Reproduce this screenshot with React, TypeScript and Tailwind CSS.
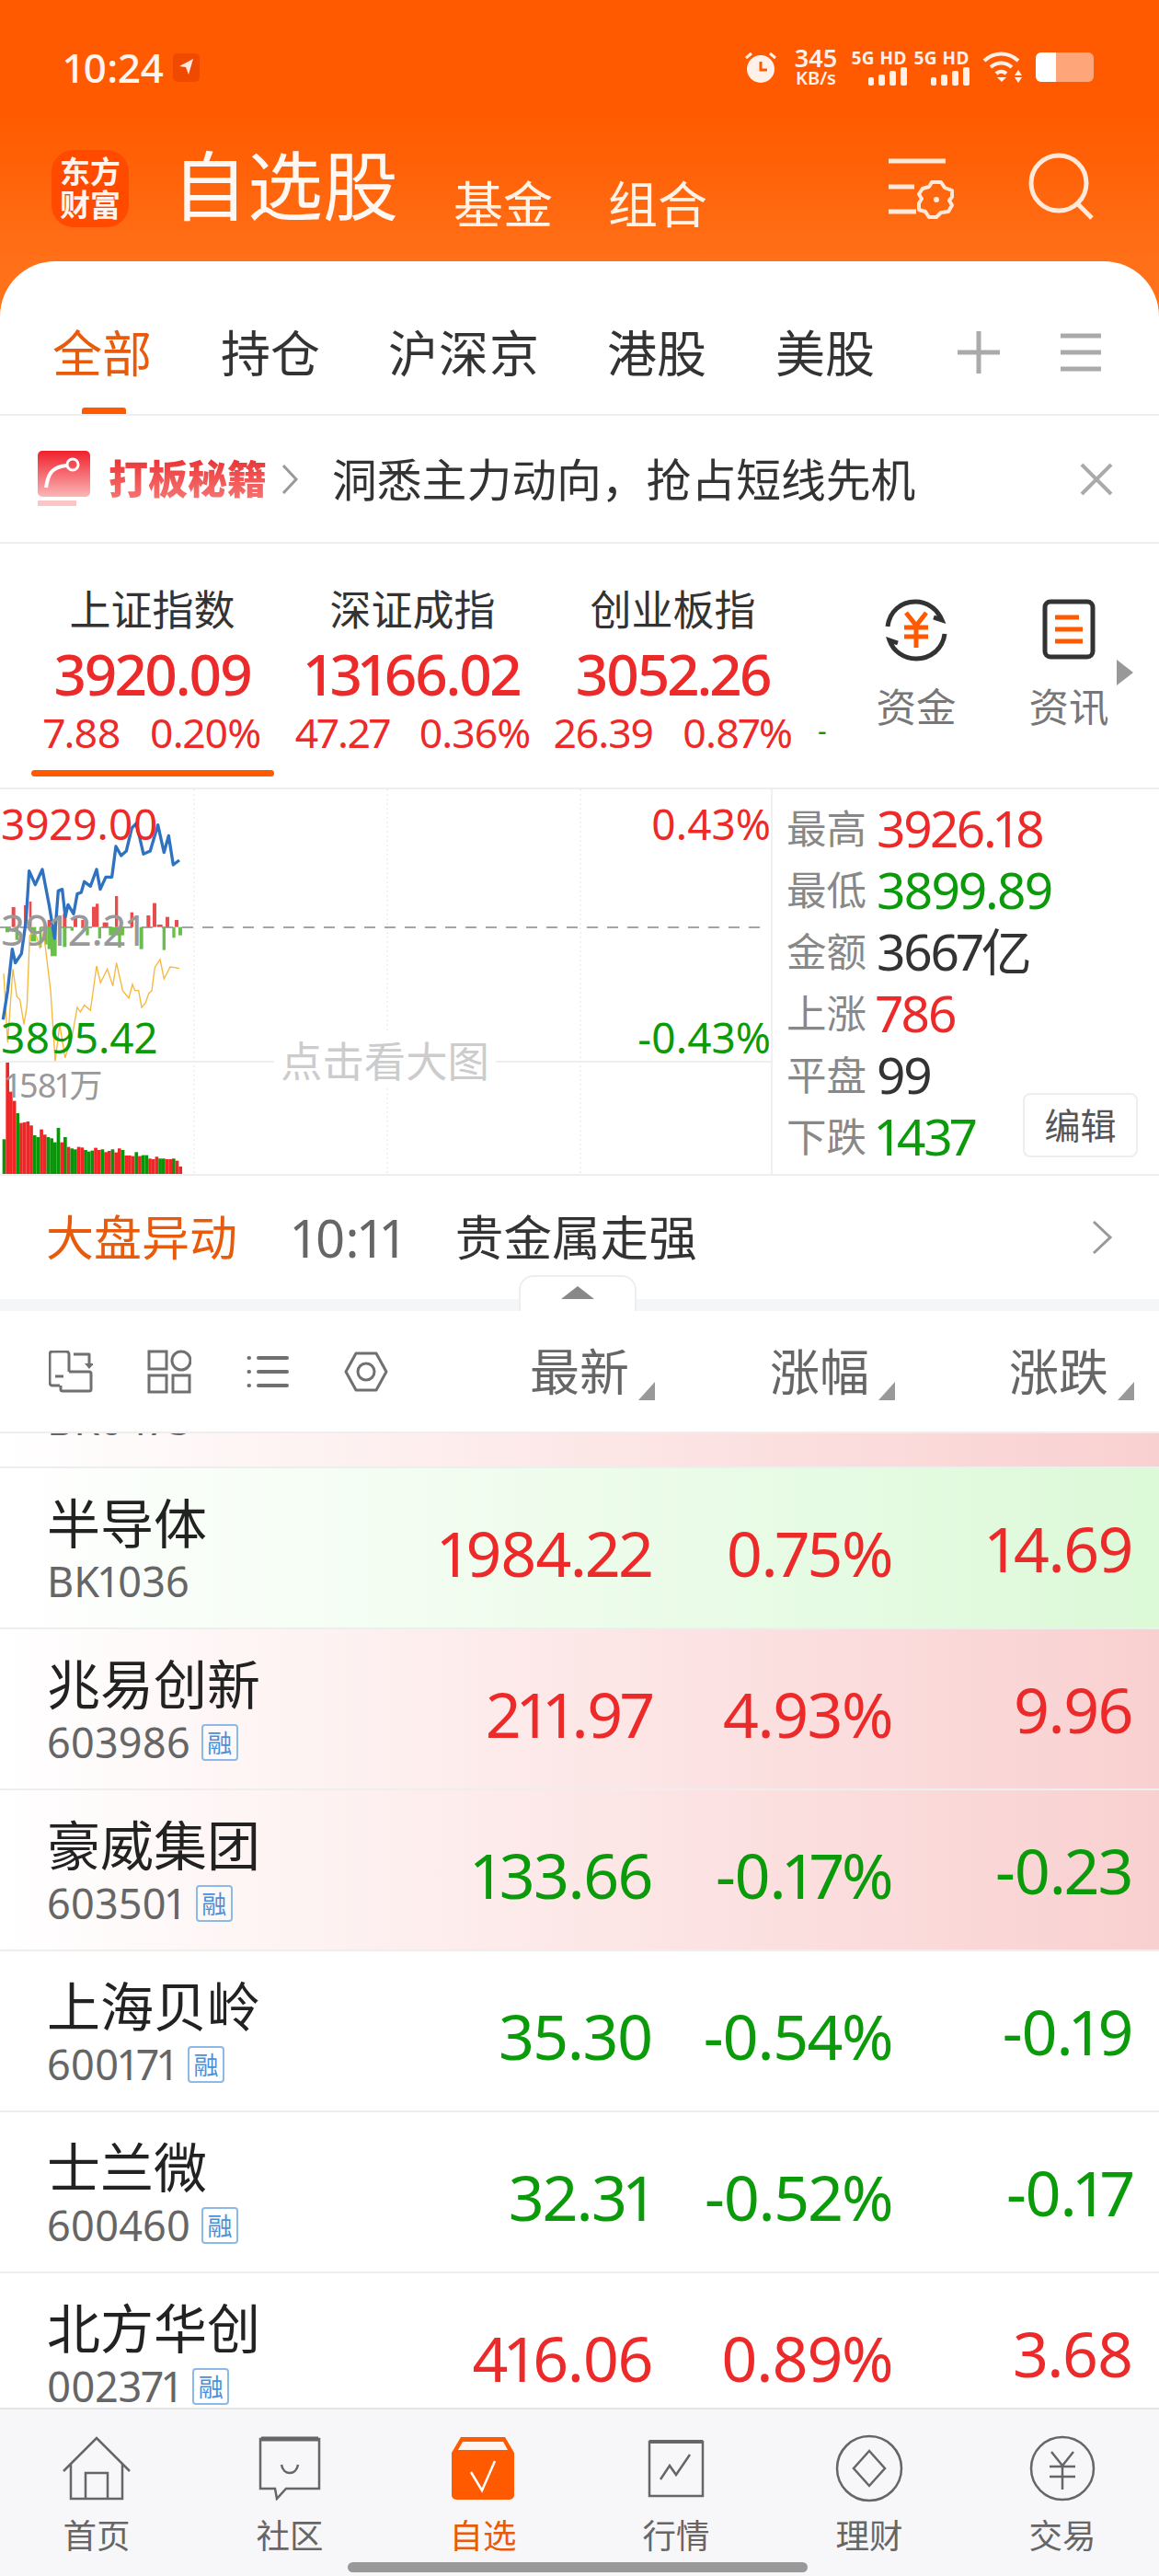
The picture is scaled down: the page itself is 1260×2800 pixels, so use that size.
const RED = 'text-[#ec2a2a]';
const GREEN = 'text-[#0a9a0a]';

const blueLine = '10,775 25,680 40,545 50,590 70,560 85,450 95,290 115,335 138,285 160,400 178,510 190,355 203,350 213,440 222,400 240,430 252,365 265,360 275,325 295,340 315,285 327,350 345,310 365,310 378,210 395,240 412,225 430,150 445,135 468,235 490,225 515,140 535,230 550,175 565,270 585,255';
const orangeLine = '12,625 25,850 42,610 55,700 65,710 78,790 88,730 97,500 115,490 130,540 142,490 165,680 180,910 195,790 212,900 235,830 252,735 262,750 275,728 295,745 315,600 328,655 350,610 368,665 380,590 400,680 420,705 432,660 440,680 452,680 462,735 475,720 485,690 495,680 505,605 522,578 535,642 555,603 570,605 585,608';

const macdUp = [[38, 408, 12], [78, 402, 10], [95, 390, 8], [155, 450, 10], [190, 440, 10], [205, 430, 12], [240, 440, 12], [265, 450, 10], [300, 407, 12], [312, 397, 10], [335, 458, 18], [375, 372, 10], [425, 425, 10], [478, 435, 12], [498, 395, 12], [512, 465, 18], [540, 440, 12], [570, 450, 12]];
const macdDown = [[18, 490, 12], [50, 515, 10], [100, 520, 18], [128, 540, 8], [145, 530, 10], [155, 545, 10], [165, 568, 20], [205, 538, 12], [230, 485, 10], [280, 500, 10], [320, 510, 10], [355, 500, 50], [385, 540, 10], [455, 545, 12], [530, 548, 10], [562, 508, 10], [582, 500, 12]];

const volBars: [string, number][] = [
  ['g', 1165], ['r', 915], ['r', 1010], ['r', 1040], ['g', 1080], ['r', 1112], ['r', 1110], ['r', 1107], ['r', 1120], ['g', 1152],
  ['g', 1158], ['r', 1133], ['r', 1150], ['g', 1158], ['g', 1162], ['g', 1175], ['g', 1128], ['r', 1175], ['g', 1158], ['r', 1190],
  ['g', 1195], ['g', 1198], ['r', 1190], ['r', 1192], ['g', 1200], ['g', 1205], ['g', 1202], ['r', 1193], ['r', 1200], ['g', 1198],
  ['r', 1207], ['r', 1203], ['g', 1198], ['r', 1208], ['r', 1195], ['g', 1200], ['r', 1218], ['r', 1218], ['r', 1220], ['g', 1207],
  ['r', 1220], ['g', 1217], ['g', 1217], ['r', 1228], ['r', 1230], ['r', 1222], ['g', 1228], ['g', 1228], ['r', 1230], ['r', 1230],
  ['g', 1228], ['r', 1235], ['r', 1254],
];

const stats = [
  { label: '最高', value: '3926.18', color: RED },
  { label: '最低', value: '3899.89', color: GREEN },
  { label: '金额', value: '3667亿', color: 'text-[#333]' },
  { label: '上涨', value: '786', color: RED },
  { label: '平盘', value: '99', color: 'text-[#333]' },
  { label: '下跌', value: '1437', color: GREEN },
];

const indices = [
  { name: '上证指数', price: '3920.09', change: '7.88', pct: '0.20%' },
  { name: '深证成指', price: '13166.02', change: '47.27', pct: '0.36%' },
  { name: '创业板指', price: '3052.26', change: '26.39', pct: '0.87%' },
];

const rows = [
  { name: '半导体', code: 'BK1036', tag: false, price: '1984.22', pct: '0.75%', diff: '14.69', up: true, bg: 'bg-gradient-to-r from-white to-[#dcf9d8]' },
  { name: '兆易创新', code: '603986', tag: true, price: '211.97', pct: '4.93%', diff: '9.96', up: true, bg: 'bg-gradient-to-r from-white to-[#f9d0d0]' },
  { name: '豪威集团', code: '603501', tag: true, price: '133.66', pct: '-0.17%', diff: '-0.23', up: false, bg: 'bg-gradient-to-r from-white to-[#f9d0d0]' },
  { name: '上海贝岭', code: '600171', tag: true, price: '35.30', pct: '-0.54%', diff: '-0.19', up: false, bg: 'bg-white' },
  { name: '士兰微', code: '600460', tag: true, price: '32.31', pct: '-0.52%', diff: '-0.17', up: false, bg: 'bg-white' },
  { name: '北方华创', code: '002371', tag: true, price: '416.06', pct: '0.89%', diff: '3.68', up: true, bg: 'bg-white' },
];

const StatusBars = () => (
  <svg width="42" height="20" viewBox="0 0 42 20" fill="#fff0e8">
    <rect x="0" y="11" width="6" height="9" rx="2" />
    <rect x="11" y="8" width="7" height="12" rx="2" />
    <rect x="23" y="4" width="7" height="16" rx="2" />
    <rect x="35" y="0" width="7" height="20" rx="2" />
  </svg>
);

const SignalBlock = () => (
  <div className="flex w-[57px] flex-col items-end">
    <span className="text-[19px] font-bold leading-[20px] tracking-[0.5px] whitespace-nowrap text-[#fff0e8]">5G HD</span>
    <StatusBars />
  </div>
);

const navItems = [
  {
    label: '首页',
    icon: (
      <svg width="76" height="70" viewBox="0 0 76 70" fill="none" stroke="#666" strokeWidth="2.5">
        <path d="M2 38 38 2l36 36M10 30v38h56V30M26 68V40h24v28" />
      </svg>
    ),
  },
  {
    label: '社区',
    icon: (
      <svg width="68" height="70" viewBox="0 0 68 70" fill="none" stroke="#666" strokeWidth="2.5">
        <path d="M2 3h64v54H30l-10 11-2-11H2z" />
        <path d="M3 3h62" strokeWidth="5" />
        <path d="M25 31c2 12 16 12 18 0" />
      </svg>
    ),
  },
  {
    label: '自选',
    active: true,
    icon: (
      <svg width="68" height="68" viewBox="0 0 68 68">
        <path d="M10 0h48l10 17v46a5 5 0 0 1-5 5H5a5 5 0 0 1-5-5V17z" fill="#ff5a00" />
        <path d="M7 14h54l-5-9H12z" fill="#fff5ee" />
        <path d="M21 38l12 20 14-32" fill="none" stroke="#fff" strokeWidth="2.5" />
      </svg>
    ),
  },
  {
    label: '行情',
    icon: (
      <svg width="62" height="64" viewBox="0 0 62 64" fill="none" stroke="#666" strokeWidth="2.5">
        <path d="M2 3h58v59H2z" />
        <path d="M2 3h58" strokeWidth="4" />
        <path d="M14 44l10-15 7 10 15-22" />
      </svg>
    ),
  },
  {
    label: '理财',
    icon: (
      <svg width="74" height="74" viewBox="0 0 74 74" fill="none" stroke="#666" strokeWidth="2.5">
        <circle cx="37" cy="37" r="35" />
        <path d="M37 18l17 19-17 19-17-19z" />
      </svg>
    ),
  },
  {
    label: '交易',
    icon: (
      <svg width="72" height="72" viewBox="0 0 72 72" fill="none" stroke="#666" strokeWidth="2.5">
        <circle cx="36" cy="36" r="34" />
        <path d="M24 18l12 15 12-15M22 34h28M22 45h28M36 33v26" />
      </svg>
    ),
  },
];

const SortMark = () => (
  <svg width="18" height="20" viewBox="0 0 18 20" className="shrink-0" fill="#999">
    <path d="M18 0v20H0z" />
  </svg>
);

const App = () => {
  return (
    <div className="flex h-[2800px] w-[1260px] flex-col overflow-hidden bg-white font-['Noto_Sans','Noto_Sans_CJK_SC',sans-serif] text-[#333] proportional-nums">
      {/* Orange header */}
      <div className="shrink-0 bg-[linear-gradient(180deg,#ff5a00_0%,#ff5a00_28%,#ff7018_63%,#ff7a20_100%)]">
        {/* Status bar */}
        <div className="flex h-[146px] items-center justify-between pl-[70px] pr-[71px]">
          <div className="flex items-center gap-[10px]">
            <span className="text-[44px] font-medium leading-none text-[#fff5ee]">10:24</span>
            <div className="flex h-[31px] w-[29px] items-center justify-center rounded-[5px] bg-[#f04a00]">
              <svg width="18" height="20" viewBox="0 0 18 20" fill="#ffe9dc">
                <path d="M1 9l15-8-5 17-3-8z" />
              </svg>
            </div>
          </div>
          <div className="flex items-center">
            <svg width="36" height="36" viewBox="0 0 36 36" className="mr-[16px]">
              <circle cx="18" cy="20" r="15" fill="#fff0e8" />
              <path d="M18 12v9h7" fill="none" stroke="#ff5a00" strokeWidth="3" />
              <path d="M2 8l6-5M34 8l-6-5" stroke="#fff0e8" strokeWidth="3" />
            </svg>
            <div className="mr-[16px] flex w-[52px] flex-col items-center text-[#fff0e8]">
              <span className="text-[27px] font-semibold leading-[24px]">345</span>
              <span className="text-[20px] font-semibold leading-[20px]">KB/s</span>
            </div>
            <div className="flex gap-[11px]">
              <SignalBlock />
              <SignalBlock />
            </div>
            <svg width="44" height="34" viewBox="0 0 44 34" fill="none" stroke="#fff0e8" strokeWidth="4" className="ml-[14px]">
              <path d="M2 10c11-10 26-10 37 0M9 17c7-6 16-6 23 0M15 24c3-3 8-3 11 0" />
              <path d="M21 33l-5-5h10z" fill="#fff0e8" stroke="none" />
              <path d="M39 20l-4 6h8zM39 34l-4-6h8z" fill="#fff0e8" stroke="none" />
            </svg>
            <div className="ml-[14px] flex h-[32px] w-[63px] overflow-hidden rounded-[6px] bg-[#ffa57a]">
              <div className="h-full w-[22px] bg-white" />
            </div>
          </div>
        </div>

        {/* Title row */}
        <div className="flex h-[138px] items-start pl-[56px] pr-[70px]">
          <div className="mt-[17px] flex h-[84px] w-[84px] flex-col items-center justify-center rounded-[24px] bg-[#ff4a00] text-[33px] font-semibold leading-[36px] text-[#fff5ee]">
            <span>东方</span>
            <span>财富</span>
          </div>
          <span className="ml-[47px] mt-[5px] text-[82px] leading-[100px] text-[#fff8f2]">自选股</span>
          <span className="ml-[60px] mt-[38px] text-[54px] leading-[76px] text-[#fff3e8]">基金</span>
          <span className="ml-[60px] mt-[38px] text-[54px] leading-[76px] text-[#fff3e8]">组合</span>
          <svg width="76" height="66" viewBox="0 0 76 66" fill="none" stroke="#ffe9da" strokeWidth="5" className="ml-auto mt-[26px]">
            <path d="M0 3h62M0 31h28M0 58h30" />
            <path d="M47 26h10l4 6 8 3 0 7-3 4 3 5-4 7-8 1-5 5h-8l-4-6-7-2 0-7 3-5-3-5 4-6 7-2z" strokeWidth="4" strokeLinejoin="round" />
            <circle cx="52" cy="45" r="3" fill="#ffe9da" stroke="none" />
          </svg>
          <svg width="72" height="74" viewBox="0 0 72 74" fill="none" stroke="#ffe9da" strokeWidth="5" className="ml-[76px] mt-[20px]">
            <circle cx="33" cy="33" r="30" />
            <path d="M54 56l15 15" />
          </svg>
        </div>

        {/* Market tabs */}
        <div className="relative flex h-[166px] items-start rounded-t-[60px] bg-white pl-[57px] pt-[73px] text-[54px] leading-[54px] text-[#333]">
          <span className="text-[#e85a0c]">全部</span>
          <span className="ml-[75px]">持仓</span>
          <span className="ml-[74px] tracking-[1px]">沪深京</span>
          <span className="ml-[73px]">港股</span>
          <span className="ml-[75px]">美股</span>
          <svg width="46" height="46" viewBox="0 0 46 46" stroke="#aaa" strokeWidth="5" className="ml-[90px] mt-[3px]">
            <path d="M23 0v46M0 23h46" />
          </svg>
          <svg width="44" height="46" viewBox="0 0 44 46" stroke="#aaa" strokeWidth="5" className="ml-[66px] mt-[3px]">
            <path d="M0 5h44M0 23h44M0 41h44" />
          </svg>
          <div className="absolute bottom-0 left-[89px] h-[7px] w-[48px] rounded-t-[3px] bg-[#ff5a00]" />
        </div>
      </div>

      {/* Promo banner */}
      <div className="flex h-[141px] shrink-0 items-center border-y-2 border-[#eeeeee] pl-[41px]">
        <svg width="57" height="62" viewBox="0 0 57 62">
          <defs>
            <linearGradient id="promo" x1="0" y1="0" x2="0" y2="1">
              <stop offset="0" stopColor="#f0202c" />
              <stop offset="1" stopColor="#fbb6b6" />
            </linearGradient>
          </defs>
          <rect width="57" height="50" rx="5" fill="url(#promo)" />
          <rect y="54" width="42" height="6" fill="#fbc6c6" />
          <path d="M9 40c2-12 4-22 22-24" fill="none" stroke="#fff" strokeWidth="4" />
          <circle cx="38" cy="15" r="6" fill="none" stroke="#fff" strokeWidth="3" />
        </svg>
        <span className="ml-[20px] bg-gradient-to-b from-[#e9222c] to-[#f77a7a] bg-clip-text text-[43px] font-black leading-[56px] text-transparent">打板秘籍</span>
        <svg width="20" height="34" viewBox="0 0 20 34" fill="none" stroke="#999" strokeWidth="3" className="ml-[15px]">
          <path d="M3 2l14 15L3 32" />
        </svg>
        <span className="ml-[36px] text-[48.8px] leading-[60px] text-[#333] whitespace-nowrap">洞悉主力动向，抢占短线先机</span>
        <svg width="36" height="36" viewBox="0 0 36 36" stroke="#aaa" strokeWidth="4" className="ml-auto mr-[50px]">
          <path d="M2 2l32 32M34 2 2 34" />
        </svg>
      </div>

      {/* Index strip */}
      <div className="relative flex h-[267px] shrink-0 border-b-2 border-[#eeeeee] pl-[24px]">
        {indices.map((item, i) => (
          <div key={item.name} className="relative flex w-[283px] flex-col items-center pt-[47px]">
            <span className="text-[45px] leading-[50px] text-[#333]">{item.name}</span>
            <span className={`mt-[11px] text-[62px] font-medium leading-[66px] tracking-[-2.6px] ${RED}`}>{item.price}</span>
            <div className={`mt-[9px] flex gap-[32px] text-[44.5px] leading-[44px] tracking-[-1px] ${RED}`}>
              <span>{item.change}</span>
              <span>{item.pct}</span>
            </div>
            {i === 0 && <div className="absolute bottom-[12px] left-[10px] h-[7px] w-[264px] rounded-full bg-[#ff5a00]" />}
          </div>
        ))}
        <span className={`absolute left-[889px] top-[181px] text-[30px] leading-[44px] ${GREEN}`}>-</span>
        <div className="absolute left-[952px] top-[60px] flex w-[88px] flex-col items-center">
          <svg width="70" height="68" viewBox="0 0 70 68" fill="none">
            <path d="M4 30C6 14 18 3 34 3c13 0 24 8 29 20l-9-3M66 38c-2 16-15 27-31 27C22 65 10 57 6 45l9 3" stroke="#333" strokeWidth="5" />
            <path d="M24 15l11 14 11-14M22 31h26M22 41h26M35 29v24" stroke="#ff5a00" strokeWidth="5" />
          </svg>
          <span className="mt-[23px] text-[43.5px] leading-[52px] text-[#777]">资金</span>
        </div>
        <div className="absolute left-[1118px] top-[60px] flex w-[88px] flex-col items-center">
          <svg width="58" height="66" viewBox="0 0 58 66" fill="none">
            <rect x="3" y="3" width="52" height="60" rx="6" stroke="#333" strokeWidth="5" />
            <path d="M14 20h26M14 33h30M14 46h30" stroke="#ff5a00" strokeWidth="5" />
          </svg>
          <span className="mt-[25px] text-[43.5px] leading-[52px] text-[#777]">资讯</span>
        </div>
        <svg width="18" height="28" viewBox="0 0 18 28" fill="#999" className="absolute left-[1214px] top-[126px]">
          <path d="M0 0l18 14L0 28z" />
        </svg>
      </div>

      {/* Time chart + market stats */}
      <div className="flex h-[420px] shrink-0 border-b-2 border-[#eeeeee]">
        <div className="relative h-full w-[840px] shrink-0 border-r-2 border-[#f0f0f0]">
          <svg width="838" height="418" viewBox="0 0 838 418" className="absolute inset-0">
            <path d="M211 0v418M421 0v418M631 0v418" stroke="#eeeeee" strokeWidth="1.5" strokeDasharray="2 3" />
            <path d="M0 296h838" stroke="#eeeeee" strokeWidth="2" />
            <path d="M0 150h835" stroke="#888" strokeWidth="1.5" strokeDasharray="12 10" />
            <g transform="translate(0,-8) scale(0.3333)">
              {macdUp.map(([x, top, w]) => (
                <rect key={`u${x}`} x={x} y={top} width={w} height={473 - top} fill="#e84c4c" />
              ))}
              {macdDown.map(([x, bottom, w]) => (
                <rect key={`d${x}`} x={x} y={473} width={w} height={bottom - 473} fill="#6abf4b" />
              ))}
              {volBars.map(([c, top], i) => (
                <rect key={i} x={8 + i * 11.06} y={top} width={11.06} height={1280 - top} fill={c === 'r' ? '#f02526' : '#0a940a'} />
              ))}
              <polyline points={orangeLine} fill="none" stroke="#f5b83c" strokeWidth="4" />
              <polyline points={blueLine} fill="none" stroke="#2f72c0" strokeWidth="10" strokeLinejoin="round" />
            </g>
          </svg>
          <span className={`absolute left-[1px] top-[7px] text-[46px] leading-[60px] ${RED}`}>3929.00</span>
          <span className="absolute left-[1px] top-[122px] text-[46px] leading-[60px] text-[#999]">3912.21</span>
          <span className={`absolute left-[1px] top-[239px] text-[46px] leading-[60px] ${GREEN}`}>3895.42</span>
          <span className="absolute left-[6px] top-[302px] text-[36px] leading-[40px] tracking-[-1px] text-[#999]">1581万</span>
          <span className={`absolute right-[0px] top-[7px] text-[46px] leading-[60px] ${RED}`}>0.43%</span>
          <span className={`absolute right-[0px] top-[239px] text-[46px] leading-[60px] ${GREEN}`}>-0.43%</span>
          <span className="absolute left-[298px] top-[265px] bg-white px-[7px] text-[45.4px] leading-[60px] text-[#cccccc]">点击看大图</span>
        </div>
        <div className="relative flex flex-1 flex-col pl-[15px] pt-[9px]">
          {stats.map((s) => (
            <div key={s.label} className="flex h-[67px] items-center whitespace-nowrap">
              <span className="w-[98px] text-[43.5px] text-[#888]">{s.label}</span>
              <span className={`text-[55px] tracking-[-2.2px] ${s.color}`}>{s.value}</span>
            </div>
          ))}
          <div className="absolute left-[272px] top-[330px] flex h-[70px] w-[125px] items-center justify-center rounded-[8px] border-2 border-[#eeeeee] text-[39px] text-[#555]">编辑</div>
        </div>
      </div>

      {/* Market alert */}
      <div className="relative flex h-[134px] shrink-0 items-center pl-[50px]">
        <span className="text-[52px] text-[#e85a0c]">大盘异动</span>
        <span className="ml-[60px] text-[56px] text-[#666]">10:11</span>
        <span className="ml-[55px] text-[52.6px] text-[#333]">贵金属走强</span>
        <svg width="24" height="38" viewBox="0 0 24 38" fill="none" stroke="#999" strokeWidth="3" className="ml-auto mr-[50px]">
          <path d="M3 2l18 17L3 36" />
        </svg>
        <div className="absolute bottom-[-13px] left-[564px] flex h-[39px] w-[128px] justify-center rounded-t-[16px] border-2 border-b-0 border-[#eeeeee] bg-white pt-[10px]">
          <svg width="36" height="14" viewBox="0 0 36 14" fill="#888">
            <path d="M18 0l18 14H0z" />
          </svg>
        </div>
      </div>
      <div className="h-[13px] shrink-0 bg-[#f5f6f8]" />

      {/* Table header */}
      <div className="flex h-[133px] shrink-0 items-center border-b-2 border-[#eeeeee] pl-[53px] pr-[27px]">
        <svg width="48" height="46" viewBox="0 0 48 46" fill="none" stroke="#707070" strokeWidth="3" strokeLinejoin="round">
          <path d="M12 38H4a3 3 0 0 1-3-3V4a3 3 0 0 1 3-3h15a3 3 0 0 1 3 3v19" />
          <path d="M22 23h22a2 2 0 0 1 2 2v17a2 2 0 0 1-2 2H15a2 2 0 0 1-2-2v-4" />
          <path d="M7 28h9M27 4h17v12" />
          <path d="M39 14h10l-5 6z" fill="#707070" stroke="none" />
        </svg>
        <svg width="48" height="48" viewBox="0 0 48 48" fill="none" stroke="#707070" strokeWidth="3" className="ml-[59px]">
          <rect x="2" y="2" width="19" height="19" />
          <circle cx="37" cy="12" r="10" />
          <rect x="2" y="28" width="19" height="18" />
          <rect x="28" y="28" width="18" height="18" />
        </svg>
        <svg width="46" height="38" viewBox="0 0 46 38" fill="none" stroke="#707070" strokeWidth="4" strokeLinecap="round" className="ml-[60px]">
          <path d="M2.5 4h.5M13 4h31M2.5 19h.5M13 19h31M2.5 34h.5M13 34h31" />
        </svg>
        <svg width="48" height="44" viewBox="0 0 48 44" fill="none" stroke="#707070" strokeWidth="3" className="ml-[60px]">
          <path d="M13 2h22l11 20-11 20H13L2 22z" strokeLinejoin="round" />
          <circle cx="24" cy="22" r="9" />
        </svg>
        <div className="ml-auto flex text-[54px] leading-none text-[#666]">
          <div className="flex w-[261px] items-end justify-end">
            <span>最新</span>
            <span className="mb-[-4px] ml-[10px]"><SortMark /></span>
          </div>
          <div className="flex w-[261px] items-end justify-end">
            <span>涨幅</span>
            <span className="mb-[-4px] ml-[10px]"><SortMark /></span>
          </div>
          <div className="flex w-[260px] items-end justify-end">
            <span>涨跌</span>
            <span className="mb-[-4px] ml-[10px]"><SortMark /></span>
          </div>
        </div>
      </div>

      {/* Stock rows */}
      <div className="min-h-0 flex-1 overflow-hidden">
        <div className="h-[38px] overflow-hidden border-b-2 border-[#eeeeee] bg-gradient-to-r from-white to-[#f9d0d0] pl-[51px]">
          <div className="mt-[-36px] text-[45px] leading-[42px] text-[#666]">BK0475</div>
        </div>
        {rows.map((row) => {
          const color = row.up ? RED : GREEN;
          return (
            <div key={row.code} className={`flex h-[175px] items-start border-b-2 border-[#eeeeee] pl-[51px] ${row.bg}`}>
              <div className="flex flex-col whitespace-nowrap pt-[26px]">
                <span className="text-[58px] leading-[68px] text-[#222]">{row.name}</span>
                <div className="flex items-center">
                  <span className="text-[45px] leading-[58px] text-[#666]">{row.code}</span>
                  {row.tag && (
                    <span className="ml-[12px] flex h-[40px] w-[40px] items-center justify-center rounded-[4px] border-2 border-[#8db9e6] bg-white/40 text-[27px] leading-none text-[#4a90d9]">融</span>
                  )}
                </div>
              </div>
              <div className={`ml-auto flex pt-[55px] text-[68px] leading-[74px] tracking-[-1.5px] ${color}`}>
                <span className="w-[300px] text-right">{row.price}</span>
                <span className="w-[261px] text-right">{row.pct}</span>
                <span className="mr-[29px] mt-[-5px] w-[261px] text-right">{row.diff}</span>
              </div>
            </div>
          );
        })}
      </div>

      {/* Bottom nav */}
      <div className="relative grid h-[183px] shrink-0 grid-cols-6 border-t-2 border-[#e4e4e4] bg-[#f7f7f9]">
        {navItems.map((item) => (
          <div key={item.label} className="flex flex-col items-center">
            <div className="mt-[26px] flex h-[76px] items-center">{item.icon}</div>
            <span className={`mt-[11px] text-[36.5px] leading-[48px] ${item.active ? 'text-[#e85a0c]' : 'text-[#666]'}`}>{item.label}</span>
          </div>
        ))}
        <div className="absolute bottom-[4px] left-[378px] h-[11px] w-[500px] rounded-full bg-[#999]" />
      </div>
    </div>
  );
};

export default App;
